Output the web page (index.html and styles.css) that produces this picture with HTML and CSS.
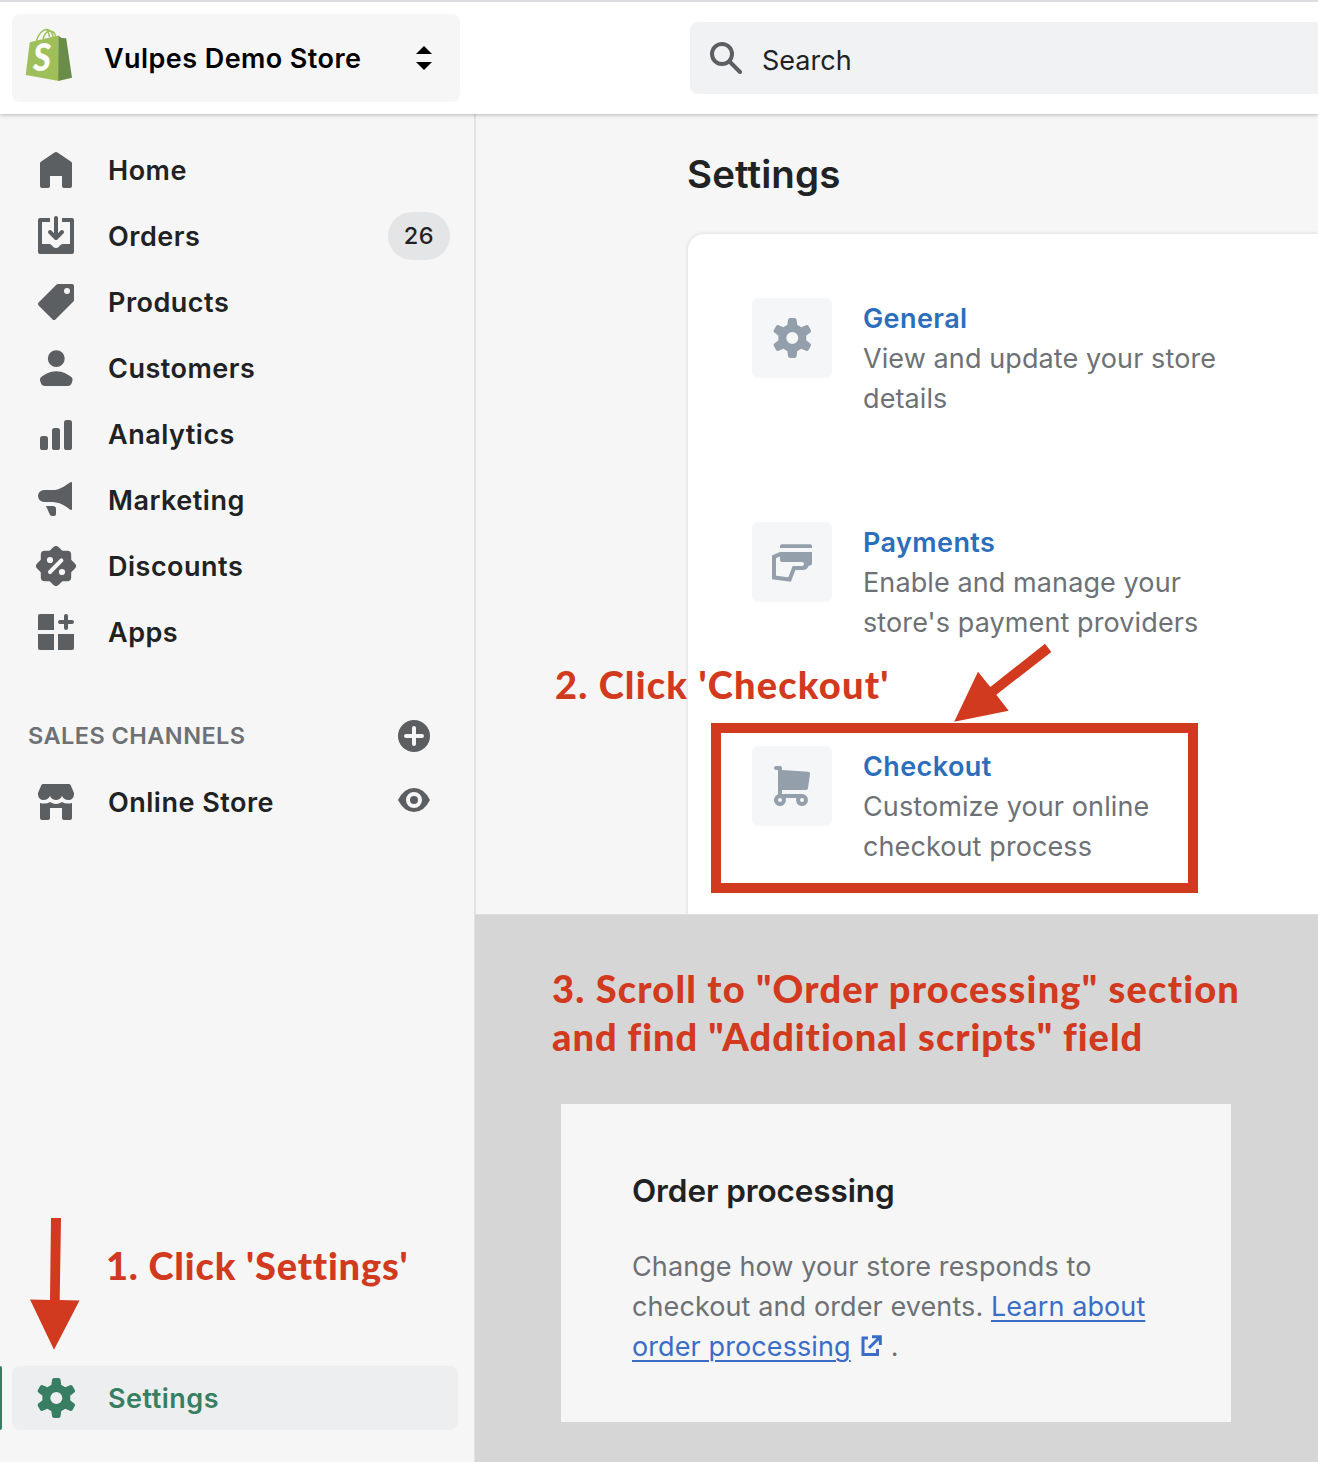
FILE: index.html
```html
<!DOCTYPE html>
<html lang="en">
<head>
<meta charset="utf-8">
<title>Settings</title>
<link rel="stylesheet" href="styles.css">
</head>
<body>
<svg class="defs" width="0" height="0" aria-hidden="true">
  <symbol id="gear" viewBox="0 0 20 20"><path fill-rule="evenodd" d="M9.027 0a1 1 0 0 0-.99.859l-.37 2.598A6.993 6.993 0 0 0 5.742 4.57l-2.437-.98a1 1 0 0 0-1.239.428L.934 5.981a1 1 0 0 0 .248 1.287l2.066 1.621a7.06 7.06 0 0 0 0 2.222l-2.066 1.621a1 1 0 0 0-.248 1.287l1.132 1.962a1 1 0 0 0 1.239.428l2.438-.979a6.995 6.995 0 0 0 1.923 1.113l.372 2.598a1 1 0 0 0 .99.859h2.265a1 1 0 0 0 .99-.859l.371-2.598a6.995 6.995 0 0 0 1.924-1.112l2.438.978a1 1 0 0 0 1.238-.428l1.133-1.962a1 1 0 0 0-.249-1.287l-2.065-1.621a7.063 7.063 0 0 0 0-2.222l2.065-1.621a1 1 0 0 0 .249-1.287l-1.133-1.962a1 1 0 0 0-1.239-.428l-2.437.979a6.994 6.994 0 0 0-1.924-1.113L12.283.86a1 1 0 0 0-.99-.859H9.027zm1.133 13a3 3 0 1 0 0-6 3 3 0 0 0 0 6z"/></symbol>
</svg>
<div class="page">
  <header class="topbar">
    <div class="store">
      <svg class="bag" viewBox="0 0 48 56">
        <path d="M11.500 14C13 7 18 2 22 2.500C26 3 27.500 6 28 10M18 12C19 7.500 22 4 25 4C28 4 30 6 30.500 9.500M24.500 10C24 6.500 23.500 4.500 21.500 3" fill="none" stroke="#9fbf5b" stroke-width="1.500"/>
        <path d="M4.600 16.200Q4.800 15.200 5.800 14.900L33 8.500L34 54L.7 48z" fill="#9fbf5b"/>
        <path d="M33.300 8.500L36.500 11L40.500 11.200Q41.200 11.300 41.300 12L47 50.700L33.300 54z" fill="#698c48"/>
        <text class="bag-s" x="8" y="43.500" textLength="18" lengthAdjust="spacingAndGlyphs">S</text>
      </svg>
      <span class="store-name">Vulpes Demo Store</span>
      <svg class="updown" viewBox="0 0 16 24"><path d="M0 8L8 0l8 8zM0 16h16l-8 8z"/></svg>
    </div>
    <div class="search">
      <svg class="lens" viewBox="0 0 32 32"><circle cx="12" cy="12" r="10"/><path d="M19.500 19.500L30 30"/></svg>
      <span>Search</span>
    </div>
  </header>
  <div class="body">
    <nav class="sidebar">
      <a class="item"><svg class="icon" viewBox="0 0 20 20"><path d="M10.560 1.170a1 1 0 0 0-1.120 0L2.400 5.900a1 1 0 0 0-.4.800V18a1 1 0 0 0 1 1h3a1 1 0 0 0 1-1v-5h6v5a1 1 0 0 0 1 1h3a1 1 0 0 0 1-1V6.700a1 1 0 0 0-.4-.8z"/></svg><span>Home</span></a>
      <a class="item"><svg class="icon" viewBox="0 0 20 20"><path d="M11 1a1 1 0 1 0-2 0v7.586L7.707 7.293a1 1 0 0 0-1.414 1.414l3 3a1 1 0 0 0 1.414 0l3-3a1 1 0 0 0-1.414-1.414L11 8.586V1z"/><path d="M3 14V3h4V1H2a1 1 0 0 0-1 1v16a1 1 0 0 0 1 1h16a1 1 0 0 0 1-1V2a1 1 0 0 0-1-1h-5v2h4v11h-3.500c-.775 0-1.388.662-1.926 1.244l-.11.120A1.994 1.994 0 0 1 10 16a1.994 1.994 0 0 1-1.463-.637l-.111-.119C7.888 14.664 7.275 14 6.500 14H3z"/></svg><span>Orders</span><b class="count">26</b></a>
      <a class="item"><svg class="icon" viewBox="0 0 20 20"><path fill-rule="evenodd" d="M10.293 1.293A1 1 0 0 1 11 1h7a1 1 0 0 1 1 1v7a1 1 0 0 1-.293.707l-9 9a1 1 0 0 1-1.414 0l-7-7a1 1 0 0 1 0-1.414zM15.500 6a1.500 1.500 0 1 0 0-3 1.500 1.500 0 0 0 0 3z"/></svg><span>Products</span></a>
      <a class="item"><svg class="icon" viewBox="0 0 20 20"><path d="M14.363 5.220a4.220 4.220 0 1 1-8.439 0 4.220 4.220 0 0 1 8.439 0zM2.670 14.469c1.385-1.090 4.141-2.853 7.474-2.853 3.332 0 6.089 1.764 7.474 2.853.618.486.810 1.308.567 2.056l-.333 1.020A2.110 2.110 0 0 1 15.846 19H4.441a2.110 2.110 0 0 1-2.005-1.455l-.333-1.020c-.245-.748-.052-1.570.567-2.056z"/></svg><span>Customers</span></a>
      <a class="item"><svg class="icon" viewBox="0 0 20 20"><rect x="2" y="11" width="4" height="7" rx="1.300"/><rect x="8" y="7" width="4" height="11" rx="1.300"/><rect x="14" y="3" width="4" height="15" rx="1.300"/></svg><span>Analytics</span></a>
      <a class="item"><svg class="icon" viewBox="0 0 20 20"><path d="M4 5h4.500C11.500 5 14 3.300 17.200 1.100a.5.500 0 0 1 .8.400v13a.5.500 0 0 1-.8.400C14.500 12.800 11.500 11 8 11H4a3 3 0 0 1 0-6z"/><path d="M5 13h3c1 0 2 .3 2 1.200V17a1 1 0 0 1-1 1H8.200a1.500 1.500 0 0 1-1.300-.8z"/></svg><span>Marketing</span></a>
      <a class="item"><svg class="icon" viewBox="0 0 20 20"><rect x="2.400" y="2.400" width="15.200" height="15.200" rx="2"/><rect x="2.400" y="2.400" width="15.200" height="15.200" rx="2" transform="rotate(45 10 10)"/><g class="cut"><circle cx="7" cy="7" r="1.550"/><circle cx="13" cy="13" r="1.550"/><path d="M7 13L12.700 7.200"/></g></svg><span>Discounts</span></a>
      <a class="item"><svg class="icon" viewBox="0 0 20 20"><path d="M2 1h7v8H1V2a1 1 0 0 1 1-1zM1 11h8v8H2a1 1 0 0 1-1-1zM11 11h8v7a1 1 0 0 1-1 1h-7z"/><path class="line" d="M15 2v6M12 5h6"/></svg><span>Apps</span></a>
      <div class="section"><span>SALES CHANNELS</span><svg class="side-icon" viewBox="0 0 32 32"><circle cx="16" cy="16" r="16"/><path class="plus" d="M16 8v16M8 16h16"/></svg></div>
      <a class="item"><svg class="icon shop" viewBox="0 0 20 20"><path d="M3.600 1h12.800a1 1 0 0 1 .9.500L19 5.500v.8A2.700 2.700 0 0 1 16.200 9Q14 9 13 7Q12 9 10 9Q8 9 7 7Q6 9 3.800 9A2.700 2.700 0 0 1 1 6.300v-.8L2.700 1.500a1 1 0 0 1 .9-.5z"/><path d="M2 10.500Q5 11.200 7 10q1.500 1 3 1t3-1q2 1.200 5 .5V18a1 1 0 0 1-1 1h-3a1 1 0 0 1-1-1v-5H7v5a1 1 0 0 1-1 1H3a1 1 0 0 1-1-1z"/></svg><span>Online Store</span><svg class="side-icon eye" viewBox="0 0 32 32"><path d="M0 16Q6 4 16 4t16 12Q26 28 16 28T0 16z"/><circle class="ring" cx="16" cy="16" r="6"/></svg></a>
      <a class="item active"><svg class="icon"><use href="#gear"/></svg><span>Settings</span></a>
    </nav>
    <main class="main">
      <section class="settings">
        <h1>Settings</h1>
        <div class="card">
          <div class="row"><div class="tile"><svg><use href="#gear"/></svg></div><div class="copy"><h2>General</h2><p>View and update your store<br>details</p></div></div>
          <div class="row"><div class="tile"><svg viewBox="0 0 20 20"><path d="M5 1.100h14a1 1 0 0 1 1 1V3H4v-.9a1 1 0 0 1 1-1zM4 5h16v5.700a1 1 0 0 1-1 1l-1.500.3H15a1 1 0 0 0 1-1q0-1-1-1H5a1 1 0 0 1-1-1z"/><path d="M4.600 5.800L1 7.400V17.800L8.800 18.800L11 13h4.500q1.400 0 2-1.500" fill="none" stroke="currentColor" stroke-width="2"/></svg></div><div class="copy"><h2>Payments</h2><p>Enable and manage your<br>store's payment providers</p></div></div>
          <div class="row"><div class="tile"><svg viewBox="0 0 20 20"><path fill-rule="evenodd" d="M2 0h2a1 1 0 0 1 1 1v1l13 .9a1 1 0 0 1 1 1.100l-1 7a1 1 0 0 1-1 1H5v2h10a3 3 0 1 1-2.830 2H6.830A3 3 0 1 1 3 14.170V2H2a1 1 0 0 1 0-2zM4 18a1 1 0 1 0 0-2 1 1 0 0 0 0 2zm11 0a1 1 0 1 0 0-2 1 1 0 0 0 0 2z"/></svg></div><div class="copy"><h2>Checkout</h2><p>Customize your online<br>checkout process</p></div></div>
        </div>
      </section>
      <section class="order">
        <p class="note step3"><span class="l1">3. Scroll to "Order processing" section</span><br><span class="l2">and find "Additional scripts" field</span></p>
        <div class="panel">
          <h3>Order processing</h3>
          <p>Change how your store responds to<br>checkout and order events. <a>Learn about<br>order processing</a><svg class="ext" viewBox="0 0 22 22"><path d="M8 3H3V19.500H17.500V14M12 1.700H20.300V10M20 2L9 13"/></svg>.</p>
        </div>
      </section>
    </main>
  </div>
  <svg class="arrows" viewBox="0 0 1318 1462"><path d="M51 1218h10l-1.300 82 19.800.5L54 1349.700L30 1299.500l20 .5zM1045 643.700l6.300 8.300-55 42.700 12.400 16-54.500 11L978 671.700l12.300 15.300z"/></svg>
  <div class="frame"></div>
  <p class="note step1">1. Click 'Settings'</p>
  <p class="note step2">2. Click 'Checkout'</p>
</div>
</body>
</html>
```
FILE: styles.css
```css
* { box-sizing: border-box; }
body, h1, h2, h3, p { margin: 0; }
body { font-family: Inter, "Liberation Sans", sans-serif; font-size: 27px; color: #202223; background: #f6f6f6; }
svg { display: block; flex: none; }
.defs { position: absolute; }
.page { position: relative; width: 1318px; height: 1462px; overflow: hidden; display: flex; flex-direction: column; }

.topbar { position: relative; z-index: 1; height: 114px; flex: none; display: flex; justify-content: space-between; background: #fff; border-top: 2px solid #dcdce1; box-shadow: 0 1px 4px rgba(0, 0, 0, .26); }
.store { width: 448px; height: 88px; margin: 12px 0 0 12px; padding: 0 28px 0 13px; display: flex; align-items: center; background: #f6f6f6; border-radius: 8px; }
.bag { width: 48px; height: 56px; margin-top: -7px; }
.bag-s { font: italic 900 38px Lato, sans-serif; fill: #fff; }
.store-name { margin-left: 31px; flex: 1; font-weight: 600; color: #000; letter-spacing: .43px; }
.updown { width: 16px; height: 24px; }
.search { width: 628px; height: 72px; margin-top: 20px; padding-left: 20px; display: flex; align-items: center; gap: 20px; background: #f1f2f4; border-radius: 8px 0 0 8px; }
.search span { padding-top: 4px; }
.lens { width: 32px; height: 32px; fill: none; stroke: #5c5f62; stroke-width: 4; stroke-linecap: round; }

.body { flex: 1; display: flex; }
.sidebar { width: 476px; border-right: 2px solid #e1e3e5; padding: 24px 16px 32px 12px; display: flex; flex-direction: column; gap: 2px; }
.item { height: 64px; flex: none; padding: 0 28px 0 24px; display: flex; align-items: center; font-weight: 600; letter-spacing: .5px; border-radius: 8px; }
.item span { margin-left: 32px; flex: 1; }
.icon { width: 40px; height: 40px; fill: #5c5f62; }
.line { fill: none; stroke: #5c5f62; stroke-width: 2; stroke-linecap: round; }
.cut { fill: #f6f6f6; }
.cut path { stroke: #f6f6f6; stroke-width: 2; stroke-linecap: round; }
.count { height: 48px; width: 62px; margin-right: -20px; padding-bottom: 2px; border-radius: 24px; background: #e4e5e7; font-size: 23.500px; font-weight: 500; letter-spacing: .5px; display: flex; align-items: center; justify-content: center; }
.section { height: 64px; margin-top: 38px; padding: 0 28px 0 16px; display: flex; align-items: center; justify-content: space-between; font-size: 23.500px; font-weight: 600; letter-spacing: .45px; color: #6d7175; }
.section span { padding-bottom: 2px; }
.side-icon { width: 32px; height: 32px; fill: #5c5f62; }
.plus { stroke: #f6f6f6; stroke-width: 4; stroke-linecap: round; }
.eye { margin-top: -4px; }
.ring { stroke: #f6f6f6; stroke-width: 4; }
.active { position: relative; margin-top: auto; background: #edeeef; color: #377e62; }
.active .icon { fill: #377e62; }
.active::before { content: ""; position: absolute; left: -12px; top: 0; width: 2px; height: 64px; background: #377e62; border-radius: 0 2px 2px 0; }

.main { flex: 1; display: flex; flex-direction: column; }
.settings { height: 800px; padding: 36px 0 0 212px; display: flex; flex-direction: column; overflow: hidden; }
h1 { margin-left: -1px; font-size: 38.500px; line-height: 48px; font-weight: 600; letter-spacing: .1px; }
.card { flex: 1; margin-top: 36px; padding: 64px 0 0 64px; background: #fff; border-radius: 16px 0 0 0; box-shadow: 0 0 4px rgba(23, 24, 24, .14); }
.row { height: 224px; display: flex; gap: 31px; }
.tile { width: 80px; height: 80px; display: flex; align-items: center; justify-content: center; background: #f4f6f8; border-radius: 6px; color: #949fac; fill: #949fac; }
.tile svg { width: 40px; height: 40px; overflow: visible; }
.copy { padding-top: 1px; line-height: 40px; }
h2 { font-size: 27px; line-height: 40px; font-weight: 600; letter-spacing: .4px; color: #2c6ebb; }
.copy p, .panel p { color: #6d7175; letter-spacing: .1px; }

.order { flex: 1; margin-left: -1px; padding: 49px 0 0 86px; background: #d6d6d6; border-top: 1px solid #dedede; }
.panel { width: 670px; height: 318px; margin-top: 44px; padding: 67px 0 0 71px; background: #f6f6f6; }
h3 { font-size: 31.500px; line-height: 40px; font-weight: 600; letter-spacing: -.1px; }
.panel p { margin-top: 36px; line-height: 40px; }
.panel a { color: #3b6dc7; text-decoration: underline; text-decoration-thickness: 2px; text-underline-offset: 4px; }
.ext { display: inline-block; width: 22px; height: 22px; margin: 0 9px 0 9px; vertical-align: -1px; fill: none; stroke: #3b6dc7; stroke-width: 3; }

.note { font-family: Lato, sans-serif; font-weight: 900; font-size: 38px; line-height: 48px; color: #d23a20; white-space: nowrap; letter-spacing: .95px; font-variant-ligatures: none; }
.step3 { margin-left: -9px; }
.l1 { letter-spacing: 1.180px; }
.arrows { position: absolute; z-index: 2; left: 0; top: 0; width: 1318px; height: 1462px; fill: #d23a20; }
.frame { position: absolute; z-index: 2; left: 711px; top: 723px; width: 487px; height: 170px; border: 10px solid #d23a20; }
.step1 { position: absolute; left: 106px; top: 1241px; letter-spacing: .8px; }
.step2 { position: absolute; left: 555px; top: 660px; letter-spacing: 1.180px; }
```
